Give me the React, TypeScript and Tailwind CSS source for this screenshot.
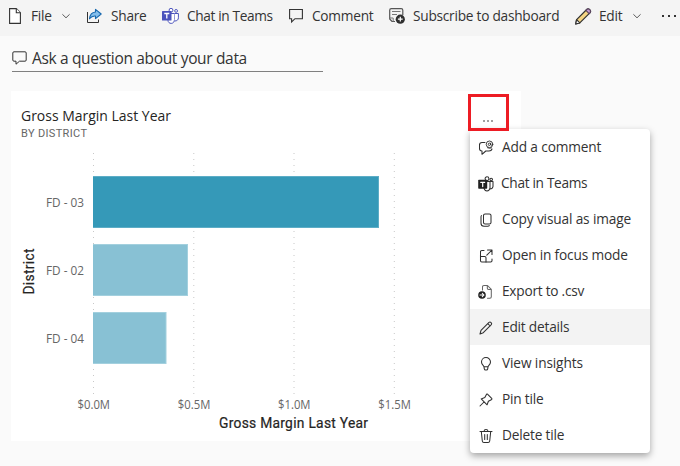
import type { ReactNode } from 'react';

const Chevron = () => (
  <svg className="h-2 w-2 shrink-0" viewBox="0 0 8 8" fill="none" stroke="#5c5c5c">
    <path d="M.4 2.3 4 5.8l3.6-3.5" />
  </svg>
);

const FileIcon = () => (
  <svg className="h-4 w-3" viewBox="0 0 12 16" fill="#fff" stroke="#333" strokeWidth="1.1">
    <path d="M.6.6h6.7l4.1 4.1v10.7H.6z" />
    <path d="M7.3.6v4.1h4.1" />
  </svg>
);

const ShareIcon = () => (
  <svg className="h-4 w-4" viewBox="0 0 16 16" fill="none">
    <path d="M1.5 4v10.5h11v-3" stroke="#333" />
    <path d="M9.5 1.4 15.2 6l-5.7 4.6V8C7 7.8 5.100 8.600 3.500 10.800 3.900 6.800 6 4.300 9.500 4z" fill="#83beec" stroke="#1768ae" strokeWidth="1.1" strokeLinejoin="round" />
  </svg>
);

const TeamsIcon = () => (
  <svg className="h-4 w-[17px]" viewBox="0 0 17 16" fill="none" stroke="#4b53bc">
    <circle cx="9" cy="2.200" r="1.900" fill="#fff" />
    <circle cx="14.100" cy="2.900" r="1.400" fill="#fff" />
    <path d="M6 5.500h6.500v6c0 2.300-1.400 3.900-3.300 3.900-1.800 0-3.200-1.200-3.200-3.100z" fill="#fff" />
    <path d="M12.500 5.500h3.900v4.300c0 1.900-1.300 3.200-3.700 3.200" fill="#fff" />
    <rect x="0" y="3" width="9.500" height="9.500" rx=".6" fill="#4b53bc" stroke="none" />
    <path d="M2.300 5.500h5M4.800 5.500v5" stroke="#fff" strokeWidth="1.300" />
  </svg>
);

const CommentIcon = () => (
  <svg className="h-4 w-[14px]" viewBox="0 0 14 16" fill="none" stroke="#333" strokeWidth="1.1">
    <path d="M.6 1.500h12.800v9.200H6L2.600 14v-3.300h-2z" />
  </svg>
);

const SubscribeIcon = () => (
  <svg className="h-4 w-4" viewBox="0 0 16 16" fill="none">
    <path d="M6 13.500H3L.7 11V2.200Q.7.600 2.300.600h9.900q1.600 0 1.600 1.600V7" stroke="#555" strokeWidth="1.200" />
    <path d="M3 3.500h8.500M3 6.500h5" stroke="#777" strokeWidth="1.200" />
    <path d="M.8 10h3.400v3.500" stroke="#777" />
    <circle cx="11.300" cy="11.200" r="4.600" fill="#303030" />
    <path d="M11.300 8.800v4.800M8.900 11.200h4.800" stroke="#fff" strokeWidth="1.200" />
  </svg>
);

const ColorPencil = () => (
  <svg className="h-[17px] w-[17px]" viewBox="0 0 17 17" stroke="#333" strokeWidth="1.200" strokeLinejoin="round">
    <path d="M1.600 11.600 11.700 1.500q1.400-1.300 3 .1t.2 3.200L4.800 14.900.7 16z" fill="#f4d483" />
    <path d="m10.900 2.300.8-.8q1.400-1.300 3 .1t.2 3.200l-.8.800z" fill="#c99bd4" stroke="#5b4660" />
    <path d="m1.600 11.600 3.200 3.300L.7 16z" fill="#fafafa" />
  </svg>
);

const QuestionIcon = () => (
  <svg className="h-[14px] w-[15px]" viewBox="0 0 15 14" fill="none" stroke="#333">
    <path d="M2 .8h11q1.200 0 1.200 1.200v7q0 1.200-1.200 1.200H7.500L4 13.200v-3H2Q.8 10.200.8 9V2Q.8.800 2 .8z" />
  </svg>
);

interface ToolProps {
  icon: ReactNode;
  label: string;
  className: string;
  labelClass: string;
  menu?: boolean;
}

function Tool({ icon, label, className, labelClass, menu }: ToolProps) {
  return (
    <button className={`flex h-8 shrink-0 items-center whitespace-nowrap ${className}`}>
      {icon}
      <span className={`pt-px ${labelClass}`}>{label}</span>
      {menu && <Chevron />}
    </button>
  );
}

const MenuSvg = ({ children }: { children: ReactNode }) => (
  <svg className="mt-px h-4 w-4 shrink-0" viewBox="0 0 16 16" fill="none" stroke="#303030" strokeWidth="1.050" strokeLinecap="round" strokeLinejoin="round">
    {children}
  </svg>
);

const menuItems: { label: string; labelClass: string; icon: ReactNode }[] = [
  {
    label: 'Add a comment',
    labelClass: 'ml-2 tracking-[-0.15px]',
    icon: (
      <>
        <path d="M7 2.500H4Q1.500 2.500 1.500 5v3.500Q1.500 11 4 11v3.300L7.800 11H11q2.500 0 3-2" />
        <circle cx="11.500" cy="4.300" r="3.300" strokeWidth=".9" />
        <circle cx="11.400" cy="4.300" r="1.200" strokeWidth=".9" />
        <path d="M12.600 3.200v1.400q.6 1.200 1.800.3M9.500 7.800q2 1 4 .1" strokeWidth=".9" />
      </>
    ),
  },
  {
    label: 'Chat in Teams',
    labelClass: 'ml-[7px] tracking-[-0.32px]',
    icon: (
      <>
        <circle cx="9" cy="2.700" r="1.900" />
        <circle cx="13.200" cy="3.500" r="1.300" />
        <path d="M6 5.500h6v6.500q-.5 2.900-3 2.900T6 12zM12 5.500h3v5q-.4 2.500-3 2.500" />
        <rect x=".2" y="3.800" width="9" height="9" rx=".7" fill="#222" stroke="none" />
        <path d="M2.700 6.300h4M4.700 6.300v4.300" stroke="#fff" strokeWidth="1.200" />
      </>
    ),
  },
  {
    label: 'Copy visual as image',
    labelClass: 'ml-2 tracking-[-0.15px]',
    icon: (
      <>
        <rect x="5.500" y="2" width="7.500" height="10" rx="1.600" />
        <path d="M3.500 3.500Q3 4 3 5v6.200q0 3 3 3h3.700q1.100 0 1.600-.6" />
      </>
    ),
  },
  {
    label: 'Open in focus mode',
    labelClass: 'ml-2 tracking-[-0.18px]',
    icon: (
      <>
        <path d="M6 2.500H3.800Q2.500 2.500 2.500 3.800v9Q2.500 14 3.800 14h8.900q1.300 0 1.300-1.200V11" />
        <path d="M9.500 2H14v4.500M14 2 8.800 7.200M2.500 8.500h4.200q1.300 0 1.300 1.300V14" />
      </>
    ),
  },
  {
    label: 'Export to .csv',
    labelClass: 'ml-2 tracking-[-0.25px]',
    icon: (
      <>
        <path d="M4.500 6V3q0-1.500 1.500-1.500h3.500l3.800 3.800v7.500q0 1.400-1.400 1.400H9.500M9.300 1.700v2.500q0 1.300 1.300 1.300h2.500" stroke="#666" />
        <circle cx="4" cy="11" r="3.800" fill="#222" stroke="none" />
        <path d="M2 11h4M4.300 9.300 6 11l-1.700 1.700" stroke="#fff" />
      </>
    ),
  },
  {
    label: 'Edit details',
    labelClass: 'ml-2 tracking-[-0.2px]',
    icon: <path d="m3 10.400 8-8q1-.9 2.100.2t.2 2.100l-8 8L2 14zM9.800 3.600l2.400 2.400" />,
  },
  {
    label: 'View insights',
    labelClass: 'ml-2 tracking-[-0.13px]',
    icon: (
      <path d="M6 10.800C5.800 9.600 3.500 8.700 3.500 6a4.500 4.500 0 0 1 9 0c0 2.700-2.300 3.600-2.500 4.800zM6 10.800l.3 2q.2 1.200 1.300 1.200h.8q1.100 0 1.300-1.200l.3-2" />
    ),
  },
  {
    label: 'Pin tile',
    labelClass: 'ml-2 tracking-[-0.2px]',
    icon: <path d="m9.700 2.300 4 4q.6.900-.4 1.400l-2.900 1.500-1.300 3.600L3.200 6.900l3.600-1.300 1.500-2.900q.5-1 1.400-.4zM6 10 2 14" />,
  },
  {
    label: 'Delete tile',
    labelClass: 'ml-2 tracking-[-0.2px]',
    icon: (
      <path d="M2 3.500h12M6 3.300q.2-1.800 2-1.800t2 1.800M3.300 3.500l1 9.500q.2 1.500 1.600 1.500h4.200q1.400 0 1.600-1.500l1-9.500M6.700 6.500v5M9.300 6.500v5" />
    ),
  },
];

const bars = [
  { label: 'FD - 03', y: 85, width: 286, fill: '#3599b8', edge: '#5dadc6' },
  { label: 'FD - 02', y: 153, width: 95, fill: '#88c1d4', edge: '#a3d0de' },
  { label: 'FD - 04', y: 221, width: 73.5, fill: '#88c1d4', edge: '#a3d0de' },
];

const ticks = [
  { label: '$0.0M', x: 82.5 },
  { label: '$0.5M', x: 182.8 },
  { label: '$1.0M', x: 283 },
  { label: '$1.5M', x: 383.300 },
];

function Chart() {
  return (
    <svg className="block h-[350px] w-[459px]" viewBox="0 0 459 350">
      {ticks.map((t) => (
        <line key={t.label} x1={t.x} x2={t.x} y1="62" y2="304" stroke="#c8c8c8" strokeDasharray="1 5" />
      ))}
      {bars.map((b) => (
        <g key={b.label}>
          <rect x="82" y={b.y} width={b.width} height="52" fill={b.edge} />
          <rect x="82" y={b.y + 1} width={b.width - 1} height="50" fill={b.fill} />
          <text x="35" y={b.y + 31} textLength="38" lengthAdjust="spacingAndGlyphs" className="fill-[#666] font-['Open_Sans',sans-serif] text-[12.5px]">{b.label}</text>
        </g>
      ))}
      {ticks.map((t) => (
        <text key={t.label} x={t.x - 16} y="318" textLength="32.500" lengthAdjust="spacingAndGlyphs" className="fill-[#666] font-['Open_Sans',sans-serif] text-[12.5px]">{t.label}</text>
      ))}
      <text x="208" y="337" textLength="149" className="fill-[#252423] stroke-[#252423] stroke-[0.2px] font-[Roboto,sans-serif] text-[13.8px]">Gross Margin Last Year</text>
      <text transform="translate(22.800 203.500) rotate(-90)" textLength="46" className="fill-[#252423] stroke-[#252423] stroke-[0.2px] font-[Roboto,sans-serif] text-[13.8px]">District</text>
      <text x="10" y="30" textLength="150" lengthAdjust="spacingAndGlyphs" className="fill-[#252423] font-['Open_Sans',sans-serif] text-[15px]">Gross Margin Last Year</text>
      <text x="10" y="46" textLength="66" className="fill-[#666] font-[Roboto,sans-serif] text-[11px]">BY DISTRICT</text>
    </svg>
  );
}

export default function App() {
  return (
    <div className="relative h-[466px] w-[680px] overflow-hidden bg-[#fafafa] font-['Open_Sans',sans-serif] text-[13.7px] text-[#333]">
      <header className="flex h-9 items-start bg-[#f4f4f4] pl-[9px] tracking-[-0.25px]">
        <Tool icon={<FileIcon />} label="File" className="w-[77px]" labelClass="ml-[10px] w-[31px] text-left" menu />
        <Tool icon={<ShareIcon />} label="Share" className="w-[76px]" labelClass="ml-[9px]" />
        <Tool icon={<TeamsIcon />} label="Chat in Teams" className="w-[127px]" labelClass="ml-2 tracking-[-0.37px]" />
        <Tool icon={<CommentIcon />} label="Comment" className="w-[100px]" labelClass="ml-[9px]" />
        <Tool icon={<SubscribeIcon />} label="Subscribe to dashboard" className="w-[186px]" labelClass="ml-2" />
        <Tool icon={<ColorPencil />} label="Edit" className="w-[87px]" labelClass="ml-[7px] w-[34px] text-left" menu />
        <button className="flex h-8 shrink-0 items-center gap-1">
          <span className="size-[2px] bg-[#333]" />
          <span className="size-[2px] bg-[#333]" />
          <span className="size-[2px] bg-[#333]" />
        </button>
      </header>
      <div className="ml-3 mt-2 flex h-7 w-[311px] items-center border-b border-[#808080] whitespace-nowrap">
        <QuestionIcon />
        <span className="ml-[5px] pt-0.5 text-[15.5px] tracking-[-0.34px]">Ask a question about your data</span>
      </div>
      <main className="ml-[11px] mt-[19px] flex h-[350px] w-[510px] bg-white">
        <Chart />
        <button className="mt-[26px] flex h-2 w-9 items-center justify-center gap-[2px]">
          <span className="size-[2px] bg-[#a0a0a0]" />
          <span className="size-[2px] bg-[#a0a0a0]" />
          <span className="size-[2px] bg-[#a0a0a0]" />
        </button>
      </main>
      <nav className="absolute left-[470px] top-[129px] w-[180px] overflow-hidden rounded bg-white shadow-[0_3px_7px_rgba(0,0,0,0.35)]">
        {menuItems.map((item) => (
          <button
            key={item.label}
            className={`flex h-9 w-full items-center whitespace-nowrap pl-2 ${item.label === 'Edit details' ? 'bg-[#f3f3f3]' : ''}`}
          >
            <MenuSvg>{item.icon}</MenuSvg>
            <span className={`pt-px ${item.labelClass}`}>{item.label}</span>
          </button>
        ))}
      </nav>
      <div className="absolute left-[468px] top-[94px] h-[37px] w-[41px] border-[3px] border-[#ed1c24]" />
    </div>
  );
}
